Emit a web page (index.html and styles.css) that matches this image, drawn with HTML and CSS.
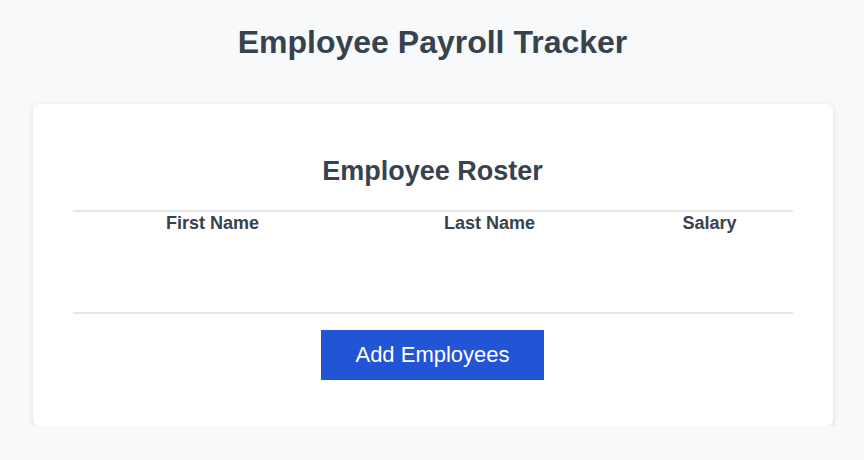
FILE: index.html
```html
<!DOCTYPE html>
<html lang="en">
<head>
<meta charset="utf-8">
<title>Employee Payroll Tracker</title>
<link rel="stylesheet" href="styles.css">
</head>
<body>
  <header class="page-header">
    <h1 class="page-title">Employee Payroll Tracker</h1>
  </header>
  <main class="card">
    <h2 class="card-title">Employee Roster</h2>
    <table class="roster">
      <thead>
        <tr>
          <th class="col-first">First Name</th>
          <th class="col-last">Last Name</th>
          <th class="col-salary">Salary</th>
        </tr>
      </thead>
      <tbody class="roster-body">
        <tr class="empty-row"><td colspan="3"></td></tr>
      </tbody>
    </table>
    <div class="actions">
      <button class="btn-add" type="button">Add Employees</button>
    </div>
  </main>
</body>
</html>
```

FILE: styles.css
```css
* { box-sizing: border-box; }

body {
  margin: 0;
  padding-left: 1px;
  background: #f8f9fb;
  font-family: "Liberation Sans", Arial, sans-serif;
  color: #37424f;
}

.page-header {
  padding-top: 24px;
  margin-bottom: 43px;
}

.page-title {
  margin: 0;
  text-align: center;
  font-size: 32px;
  font-weight: 700;
  line-height: 37px;
}

.card {
  width: 800px;
  margin: 0 auto;
  background: #fff;
  border-radius: 6px;
  box-shadow: 0 2px 6px rgba(0, 0, 0, 0.12);
  padding: 52px 40px 46px;
}

.card-title {
  margin: 0 0 23px;
  text-align: center;
  font-size: 27px;
  font-weight: 700;
  line-height: 31px;
}

.roster {
  width: 100%;
  border-collapse: collapse;
  table-layout: fixed;
  border-top: 2px solid #e6e6e6;
  border-bottom: 2px solid #e6e6e6;
}

.roster th {
  padding: 1px 0 0;
  font-size: 18px;
  font-weight: 700;
  line-height: 21px;
  text-align: center;
}

.col-first { width: 280px; }
.col-last { width: 274px; }
.col-salary { width: 166px; }

.empty-row td {
  height: 79px;
  padding: 0;
}

.actions {
  display: flex;
  justify-content: center;
  margin-top: 16px;
}

.btn-add {
  height: 50px;
  padding: 0 34px;
  border: none;
  border-radius: 0;
  background: #2254d6;
  color: #fff;
  font-family: "Liberation Sans", Arial, sans-serif;
  font-size: 22px;
  cursor: pointer;
}
```
